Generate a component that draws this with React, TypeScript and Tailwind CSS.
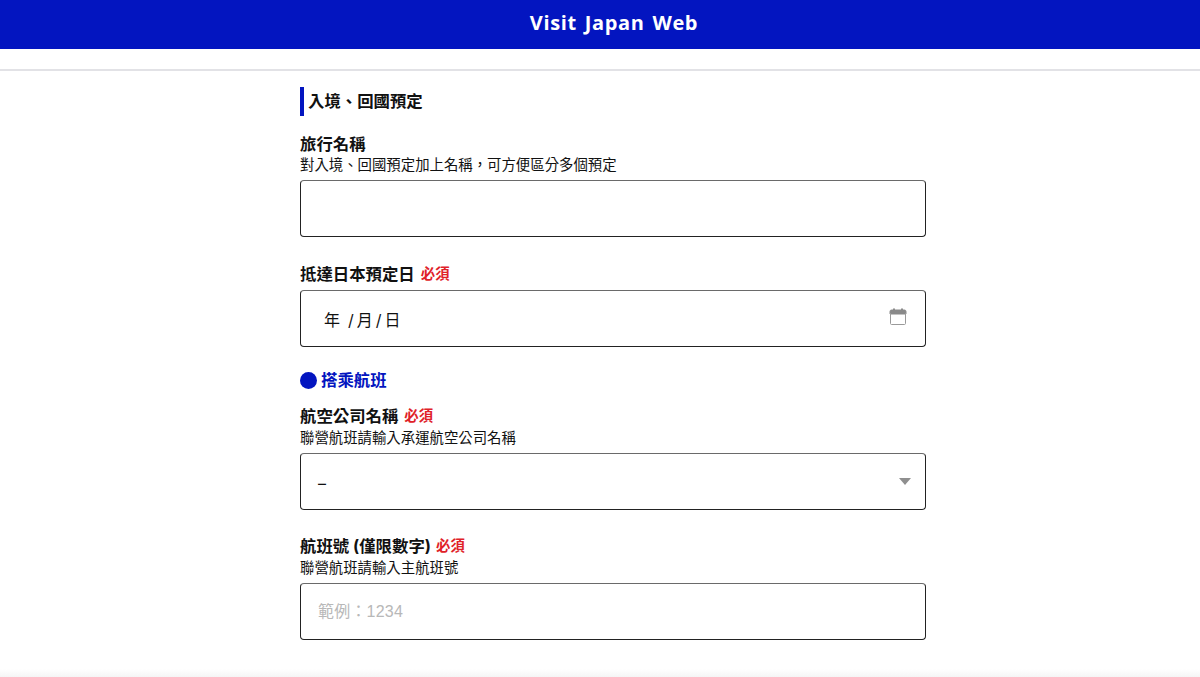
const cjk = "font-['Inter','Noto_Sans_CJK_TC',sans-serif]";

function Required() {
  return <span className="text-[14.4px] leading-[20px] font-bold text-[#e02128]">必須</span>;
}

const box = "rounded-[4px] border border-[#222] border-t-[#6a6a6a]";

export default function App() {
  return (
    <div className={`h-[677px] overflow-hidden bg-white text-[#111] flex flex-col ${cjk}`}>
      <header className="h-[49px] shrink-0 bg-[#0315c0] pl-[28px] pb-[4px] flex items-center justify-center">
        <span className="font-['Open_Sans',sans-serif] text-[20px] font-bold tracking-[0.65px] [word-spacing:2px] text-white">Visit Japan Web</span>
      </header>
      <div className="h-[22px] shrink-0 border-b-2 border-[#e2e2e6]" />
      <main className="w-[626px] ml-[300px] flex-1 pt-[16px]">
        <h2 className="h-[29px] border-l-4 border-[#0315c0] pl-[4px] pb-[1px] flex items-center text-[16.4px] font-bold">入境、回國預定</h2>
        <div className="mt-[16px] text-[16.4px] leading-[24px] font-bold">旅行名稱</div>
        <p className="text-[14.4px] leading-[20px] mt-[-1px]">對入境、回國預定加上名稱，可方便區分多個預定</p>
        <input className={`mt-[5px] block w-full h-[57px] outline-none px-[17px] ${box}`} />

        <div className="mt-[25px] flex items-center gap-[6px] h-[24px]">
          <span className="text-[16.4px] font-bold">抵達日本預定日</span>
          <Required />
        </div>
        <div className={`mt-[4px] h-[57px] pl-[23px] pr-[18px] flex items-center justify-between ${box}`}>
          <span className="flex gap-[3px] text-[16px] pt-[3px]">
            <span>年</span>
            <span className="ml-[5px]">/</span>
            <span>月</span>
            <span>/</span>
            <span>日</span>
          </span>
          <svg className="mb-[4px]" width="18" height="18" viewBox="0 0 18 18" fill="none">
            <rect x="4" y="0.5" width="2" height="3" fill="#8a8a8a" />
            <rect x="12" y="0.5" width="2" height="3" fill="#8a8a8a" />
            <path d="M1 6V3.500C1 2.700 1.600 2 2.500 2h13c.9 0 1.500.7 1.500 1.500V6z" fill="#8a8a8a" stroke="#8a8a8a" strokeWidth="1" />
            <path d="M1.500 5v10.500c0 .6.4 1 1 1h13c.6 0 1-.4 1-1V5" stroke="#9a9a9a" strokeWidth="1" />
          </svg>
        </div>

        <div className="mt-[21px] h-[24px] flex items-center gap-[4px] text-[16.4px] font-bold text-[#0315c0]">
          <span className="size-[17px] rounded-full bg-[#0315c0]" />
          搭乘航班
        </div>

        <div className="mt-[12px] flex items-center gap-[6px] h-[24px]">
          <span className="text-[16.4px] font-bold">航空公司名稱</span>
          <Required />
        </div>
        <p className="text-[14.4px] leading-[20px]">聯營航班請輸入承運航空公司名稱</p>
        <div className={`mt-[5px] h-[57px] pl-[17px] pr-[14px] flex items-center justify-between ${box}`}>
          <span className="text-[16px] pt-[3px]">–</span>
          <span className="w-0 h-0 border-x-[6.5px] border-x-transparent border-t-[7px] border-t-[#8f8f8f]" />
        </div>

        <div className="mt-[24px] flex items-center gap-[5px] h-[24px]">
          <span className="text-[16.4px] font-bold">航班號 (僅限數字)</span>
          <Required />
        </div>
        <p className="text-[14.4px] leading-[20px]">聯營航班請輸入主航班號</p>
        <input placeholder="範例：1234" className={`mt-[5px] block w-full h-[57px] outline-none px-[17px] text-[16px] font-['Liberation_Sans','Noto_Sans_CJK_TC',sans-serif] tracking-[0.2px] placeholder:text-[#b8b8b8] ${box}`} />
      </main>
      <div className="h-[8px] shrink-0 bg-linear-to-b from-white to-[#f5f5f5]" />
    </div>
  );
}
